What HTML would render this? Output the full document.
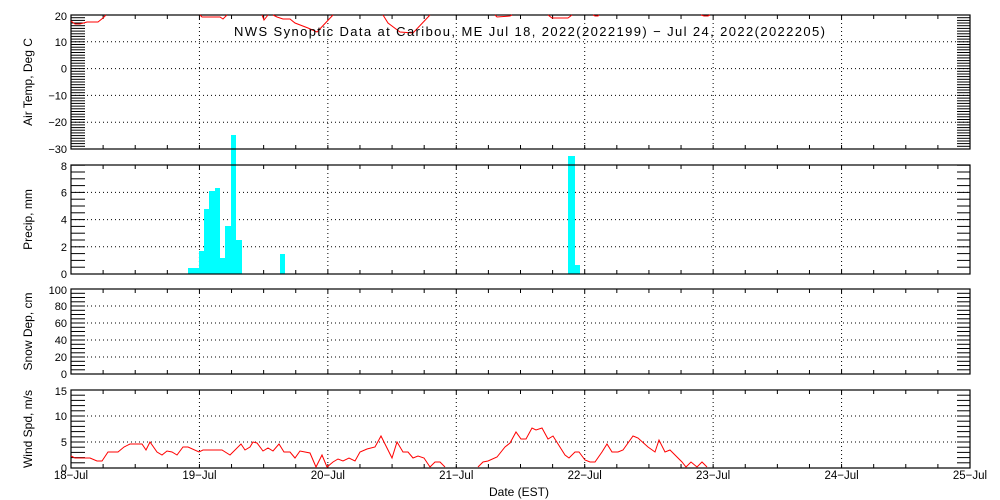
<!DOCTYPE html>
<html><head><meta charset="utf-8"><style>
html,body{margin:0;padding:0;background:#fff;width:1000px;height:500px;overflow:hidden}
svg{display:block}
text{font-family:"Liberation Sans",sans-serif;font-size:11px;fill:#000}
</style></head><body>
<svg id="s" width="1000" height="500" xmlns="http://www.w3.org/2000/svg"></svg>
<script>
const s=document.getElementById('s');let h='';
const L=71,R=970,DX=(R-L)/7;
function ln(x1,y1,x2,y2,st){h+=`<line x1="${x1}" y1="${y1}" x2="${x2}" y2="${y2}" stroke="#000" stroke-width="1" ${st||''}/>`;}
function tx(x,y,t,a,extra){h+=`<text x="${x}" y="${y}" text-anchor="${a||'end'}" ${extra||''}>${t}</text>`;}
const dot='stroke-dasharray="1,3"';
const P=[
 {t:15,b:149,y0:149,k:2.68,min:-30,max:20,maj:10,mn:1,title:'Air Temp, Deg C'},
 {t:165,b:274,y0:274,k:13.6,min:0,max:8,maj:2,mn:0.5,title:'Precip, mm'},
 {t:289,b:374,y0:374,k:0.85,min:0,max:100,maj:20,mn:5,title:'Snow Dep, cm'},
 {t:390,b:468,y0:468,k:5.2,min:0,max:15,maj:5,mn:1,title:'Wind Spd, m/s'}
];
P.forEach((p,i)=>{
 for(let v=p.min;v<=p.max+1e-6;v+=p.mn){const y=(p.y0-(v-p.min)*p.k).toFixed(1);if(y<p.t-0.5)continue;ln(L,y,L+14,y);ln(R-13,y,R,y);}
 for(let v=p.min;v<=p.max+1e-6;v+=p.maj){const y=p.y0-(v-p.min)*p.k;if(y<p.t-3)continue;
   if(y>p.t+2&&y<p.b-2)ln(L,y,R,y,dot);
   tx(67,Math.max(y,p.t+1)+4,String(v).replace('-','&#8722;'));}
 for(let d=1;d<7;d++){ln(L+d*DX,p.t,L+d*DX,p.b,dot);}
 for(let q=1;q<28;q++){const x=L+q*DX/4;ln(x,p.t,x,p.t+4);ln(x,p.b,x,p.b-4);}
 const cy=(p.t+p.b)/2;
 h+=`<text x="0" y="0" text-anchor="middle" transform="translate(32,${cy}) rotate(-90)" style="font-size:12px">${p.title}</text>`;
});
const bars=[[188,199,268],[199,204,251],[204,209,209],[209,215,191],[215,220,188],[220,225,258],[225,231,226],[231,236,135],[236,242,240],[280,285,254],[568,575,156],[575,580,265]];
bars.forEach(b=>h+=`<rect x="${b[0]}" y="${b[2]}" width="${b[1]-b[0]}" height="${274-b[2]}" fill="#00ffff"/>`);
P.forEach(p=>h+=`<rect x="${L}" y="${p.t}" width="${R-L}" height="${p.b-p.t}" fill="none" stroke="#000" stroke-width="1.2"/>`);
const tc=[[[71,21],[75,24],[80,24],[87,22],[98,22],[103,18],[106,15]],
[[200,15],[202,17],[220,17],[223,19],[227,15]],
[[262,15],[264,20],[268,15]],
[[273,15],[277,17],[283,19],[290,19],[295,23],[308,28],[317,32],[333,15]],
[[383,15],[388,23],[400,32],[413,33],[430,15]],
[[495,15],[497,17],[510,16],[512,15]],
[[548,15],[552,18],[568,18],[572,15]],
[[593,15],[595,16],[598,16],[599,15]],
[[701,15],[704,16],[708,16],[710,15]]];
tc.forEach(c=>h+=`<polyline fill="none" stroke="#f00" stroke-width="1" points="${c.map(p=>p.join(',')).join(' ')}"/>`);
const w1=[[71,456],[75,458],[90,458],[97,461],[102,461],[108,452],[118,452],[124,447],[130,444],[142,444],[146,450],[150,442],[157,452],[162,455],[167,451],[172,452],[177,455],[183,447],[188,447],[199,452],[203,450],[222,450],[230,455],[241,444],[245,450],[250,447],[253,442],[257,443],[263,451],[268,448],[273,451],[279,444],[284,452],[290,452],[295,458],[300,451],[310,453],[316,467],[322,455],[327,467],[333,462],[338,459],[343,461],[349,458],[355,461],[360,452],[367,449],[375,447],[381,436],[392,458],[397,442],[403,452],[408,452],[413,458],[418,456],[424,458],[430,467],[435,462],[440,462],[445,467]];
const w2=[[478,467],[483,462],[488,461],[497,457],[505,447],[510,443],[516,432],[521,439],[526,439],[532,428],[536,430],[542,428],[548,439],[553,436],[565,455],[569,458],[575,452],[579,452],[585,460],[590,462],[595,462],[602,452],[607,444],[612,452],[618,452],[623,450],[633,436],[638,438],[648,447],[655,452],[659,440],[665,452],[670,450],[682,462],[686,467],[691,462],[697,467],[702,462],[707,467]];
[w1,w2].forEach(w=>h+=`<polyline fill="none" stroke="#f00" stroke-width="1" points="${w.map(p=>p.join(',')).join(' ')}"/>`);
const dl=['18-Jul','19-Jul','20-Jul','21-Jul','22-Jul','23-Jul','24-Jul','25-Jul'];
dl.forEach((d,i)=>tx(L+i*DX,479,d.replace('-','&#8722;'),'middle','style="font-size:11.5px"'));
tx(519,496,'Date (EST)','middle','style="font-size:12px"');
tx(234,36,'NWS Synoptic Data at Caribou, ME  Jul 18, 2022(2022199) &#8722; Jul 24, 2022(2022205)','start','style="font-size:13px" textLength="591" lengthAdjust="spacing"');
s.innerHTML=h;
</script>
</body></html>
